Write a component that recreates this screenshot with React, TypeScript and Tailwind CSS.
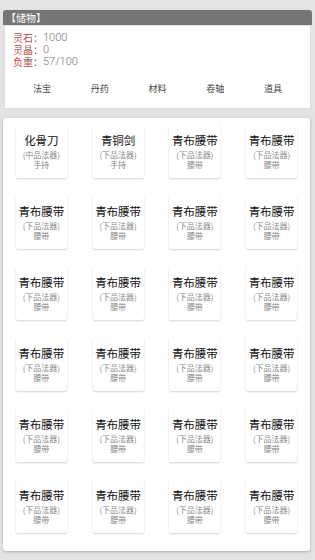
import React from "react";

const items = [
  { name: "化骨刀", grade: "(中品法器)", type: "手持" },
  { name: "青铜剑", grade: "(下品法器)", type: "手持" },
  ...Array.from({ length: 22 }, () => ({ name: "青布腰带", grade: "(下品法器)", type: "腰带" })),
];

const tabs = ["法宝", "丹药", "材料", "卷轴", "道具"];

export default function App() {
  const font = { fontFamily: '"Noto Sans CJK SC", "Noto Sans", sans-serif' };
  const num = { fontFamily: "Roboto, sans-serif" };
  return (
    <div className="w-[315px] h-[560px] bg-[#e3e3e3] pt-[10px] px-[3px]" style={font}>
      <div className="rounded-t-[3px] bg-[#757575] h-[15px] flex items-center px-[3px] text-white text-[10px] leading-none">
        【储物】
      </div>
      <div className="bg-white border border-[#dcdcdc] h-[84px] mx-[1px] pt-[6px] px-[8px] text-[10px] leading-[12px]">
        <div className="flex items-center h-[12px]"><span className="text-[#b85050]">灵石：</span><span className="text-[#777] font-light text-[11px]" style={num}>1000</span></div>
        <div className="flex items-center h-[12px]"><span className="text-[#b85050]">灵晶：</span><span className="text-[#777] font-light text-[11px]" style={num}>0</span></div>
        <div className="flex items-center h-[12px]"><span className="text-[#b85050]">负重：</span><span className="text-[#777] font-light text-[11px]" style={num}>57/100</span></div>
        <div className="grid grid-cols-5 mt-[15px] text-[9px] leading-[12px] text-[#444] text-center">
          {tabs.map((t) => (
            <div key={t}>{t}</div>
          ))}
        </div>
      </div>
      <div className="mt-[9px] mr-[2px] bg-white rounded-[3px] shadow-[0_1px_3px_rgba(0,0,0,0.25)] h-[433px] pt-[6px] grid grid-cols-4 justify-items-center content-start gap-y-[17px]">
        {items.map((it, i) => (
          <div
            key={i}
            className="w-[51px] h-[54px] bg-white rounded-[2px] shadow-[0_1px_2px_rgba(0,0,0,0.18)] flex flex-col items-center pt-[9px]"
          >
            <div className="text-[11.5px] leading-[14px] text-[#111]">{it.name}</div>
            <div className="text-[8px] leading-[11px] text-[#888] mt-[2px]">{it.grade}</div>
            <div className="text-[8px] leading-[10px] text-[#888]">{it.type}</div>
          </div>
        ))}
      </div>
    </div>
  );
}
